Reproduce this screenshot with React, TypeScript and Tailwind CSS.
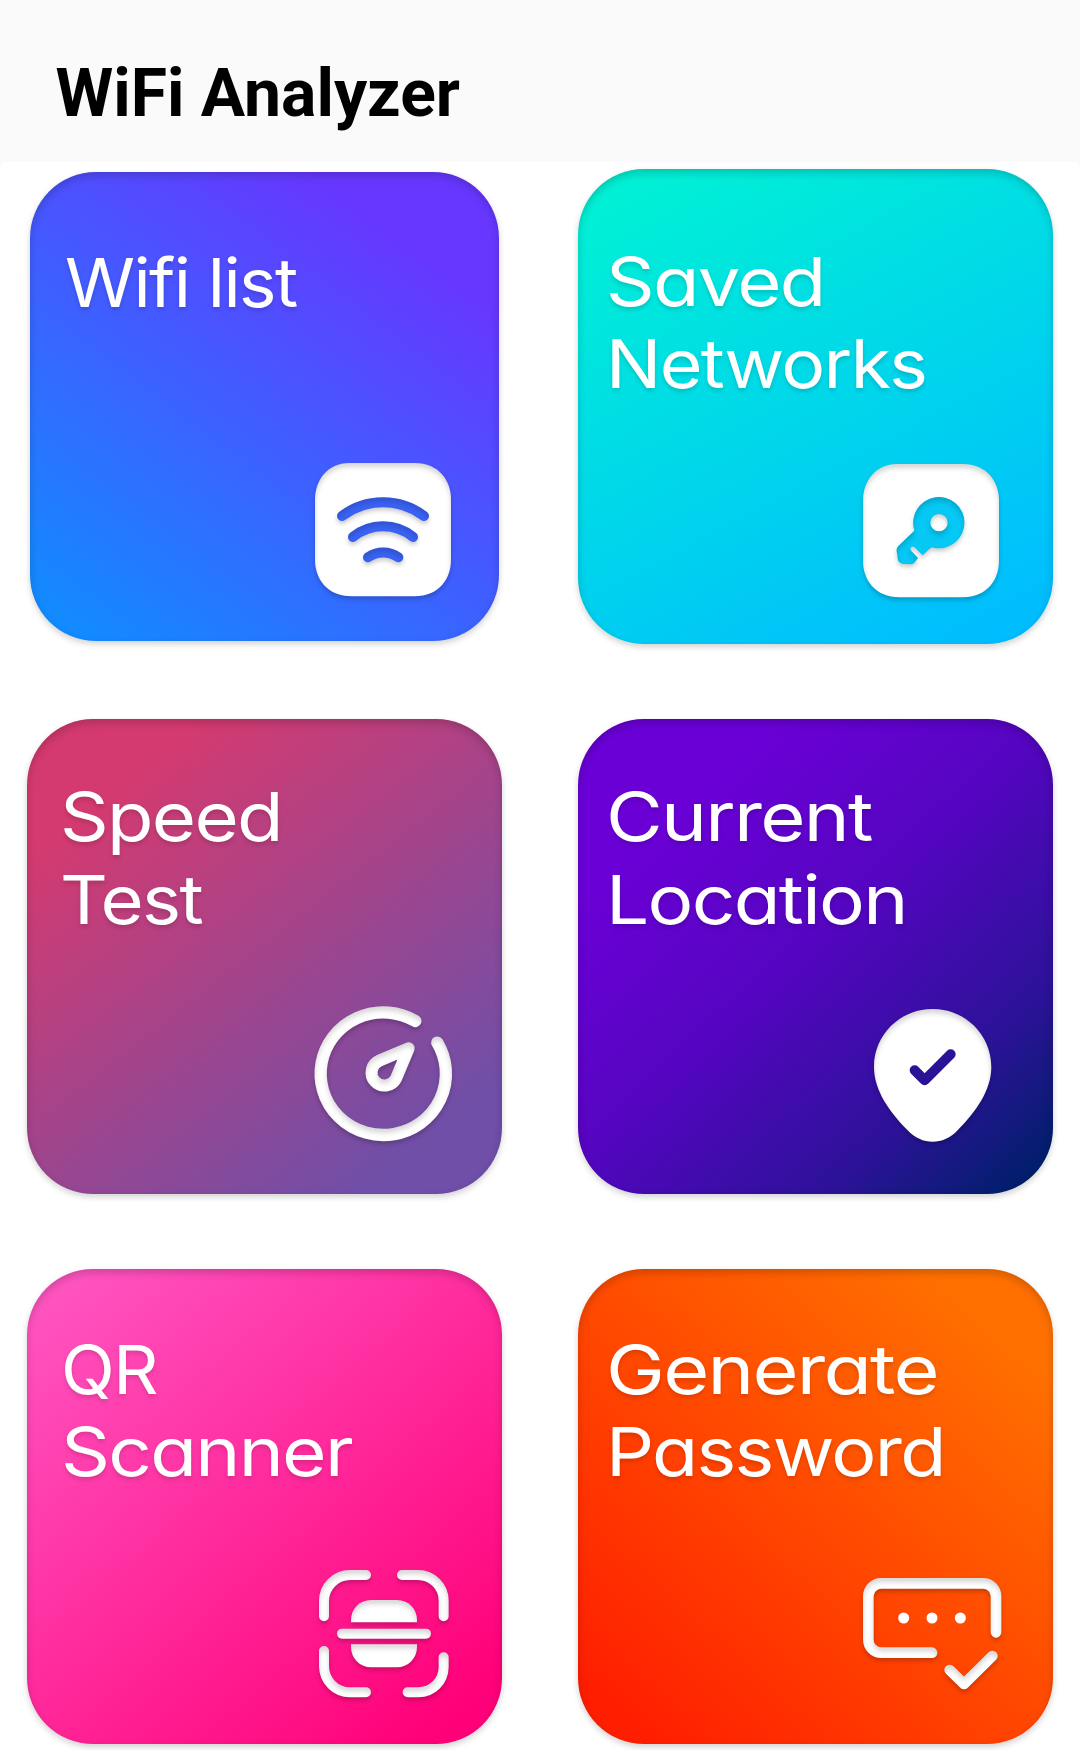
import type { ReactNode } from "react";

type Line = { text: string; scale: string };

type CardProps = {
  lines: Line[];
  shape: string;
  children: ReactNode;
};

function Card({ lines, shape, children }: CardProps) {
  return (
    <button
      className={`flex flex-col items-start justify-between text-left text-white shadow-[0_3px_6px_rgba(0,0,0,0.18),inset_0_4px_8px_rgba(0,0,0,0.18)] ${shape}`}
    >
      <span className="block text-[67px] leading-[82.3px] tracking-[-1.5px] [font-feature-settings:'cv11'] [text-shadow:0_3px_4px_rgba(0,0,0,0.14)]">
        {lines.map((line) => (
          <span key={line.text} className={`block w-max origin-left ${line.scale}`}>
            {line.text}
          </span>
        ))}
      </span>
      <span className="block self-end">{children}</span>
    </button>
  );
}

function Filters() {
  return (
    <svg className="absolute h-0 w-0" aria-hidden="true">
      <defs>
        <filter id="emboss" x="-15%" y="-15%" width="130%" height="135%" colorInterpolationFilters="sRGB">
          <feOffset in="SourceAlpha" dy="11" result="moved" />
          <feGaussianBlur in="moved" stdDeviation="8" result="soft" />
          <feComposite in="SourceAlpha" in2="soft" operator="out" result="edge" />
          <feFlood floodColor="#000" floodOpacity="0.16" />
          <feComposite in2="edge" operator="in" result="innerShade" />
          <feGaussianBlur in="SourceAlpha" stdDeviation="6" result="blurred" />
          <feOffset in="blurred" dy="8" result="drop" />
          <feFlood floodColor="#000" floodOpacity="0.2" />
          <feComposite in2="drop" operator="in" result="dropShade" />
          <feMerge>
            <feMergeNode in="dropShade" />
            <feMergeNode in="SourceGraphic" />
            <feMergeNode in="innerShade" />
          </feMerge>
        </filter>
      </defs>
    </svg>
  );
}

const tilePath =
  "M178 69H372C446 69 482 122 482 178V360C482 416 446 469 372 469H184C110 469 74 416 74 360V178C74 122 110 69 178 69Z";

function WifiIcon() {
  return (
    <svg viewBox="74 69 408 400" className="h-[133.3px] w-[136px] overflow-visible">
      <path d={tilePath} fill="#fff" filter="url(#emboss)" />
      <g fill="none" stroke="#3a63f6" strokeWidth="30" strokeLinecap="round" filter="url(#emboss)">
        <path d="M155 228A205 205 0 0 1 401 228" />
        <path d="M188 291A143 143 0 0 1 368 291" />
        <path d="M233 352A78 78 0 0 1 324 352" />
      </g>
    </svg>
  );
}

function KeyIcon() {
  return (
    <svg viewBox="74 69 408 400" className="h-[133.3px] w-[136px] overflow-visible">
      <path d={tilePath} fill="#fff" filter="url(#emboss)" />
      <g transform="translate(4 1)" filter="url(#emboss)">
        <path
          fill="#05c8f4"
          fillRule="evenodd"
          d="M224 267A77 77 0 1 1 285 320Q276 316 270 322L249 342L224 317Q218 313 214 318Q210 323 215 329L235 350L224 364Q218 370 210 369L186 367Q178 365 175 357L171 330Q169 321 176 314L219 273Q223 270 224 267ZM298 218A26 26 0 1 0 298 270A26 26 0 1 0 298 218Z"
        />
      </g>
    </svg>
  );
}

function SpeedIcon() {
  return (
    <svg viewBox="74 80 414 406" className="h-[135.3px] w-[138px] overflow-visible">
      <g fill="none" stroke="#fff" strokeLinecap="round" strokeLinejoin="round" filter="url(#emboss)">
        <path strokeWidth="37" d="M375 125A188 184 0 1 0 441 190" />
        <path strokeWidth="36" d="M355 207L267 244A39 39 0 1 0 317 298Z" />
      </g>
    </svg>
  );
}

function LocationIcon() {
  return (
    <svg viewBox="99 86 352 400" className="h-[133.3px] w-[117.3px] overflow-visible">
      <path
        fill="#fff"
        filter="url(#emboss)"
        d="M275 86C372 86 451 163 451 260C451 330 405 394 350 450C308 496 242 496 200 450C145 394 99 330 99 260C99 163 178 86 275 86Z"
      />
      <path
        d="M221 270L251 300L329 222"
        fill="none"
        stroke="#2c1295"
        strokeWidth="30"
        strokeLinecap="round"
        strokeLinejoin="round"
      />
    </svg>
  );
}

function ScanIcon() {
  return (
    <svg viewBox="87 91 390 382" className="h-[127.3px] w-[130px] overflow-visible">
      <g filter="url(#emboss)">
        <g fill="none" stroke="#fff" strokeWidth="30" strokeLinecap="round">
          <path d="M228 106H180A78 78 0 0 0 102 184V230" />
          <path d="M336 106H384A77 77 0 0 1 461 183V230" />
          <path d="M102 334V380A78 78 0 0 0 180 458H228" />
          <path d="M461 353V382A76 76 0 0 1 385 458H353" />
          <path d="M156 282H408" />
        </g>
        <path fill="#fff" d="M183 248V241A60 60 0 0 1 243 181H321A60 60 0 0 1 381 241V248Z" />
        <path fill="#fff" d="M183 314V323A60 60 0 0 0 243 383H321A60 60 0 0 0 381 323V314Z" />
      </g>
    </svg>
  );
}

function PasswordIcon() {
  return (
    <svg viewBox="68 115 416 335" className="h-[111.7px] w-[138.7px] overflow-visible">
      <g fill="none" stroke="#fff" strokeWidth="32" strokeLinecap="round" strokeLinejoin="round" filter="url(#emboss)">
        <path d="M275 339H123A39 39 0 0 1 84 300V170A39 39 0 0 1 123 131H428A39 39 0 0 1 467 170V278" />
        <path d="M328 391L371 433L456 349" />
      </g>
      <g fill="#fff">
        <circle cx="190" cy="235" r="16.5" />
        <circle cx="275" cy="235" r="16.5" />
        <circle cx="360" cy="235" r="16.5" />
      </g>
    </svg>
  );
}

export default function App() {
  return (
    <div className="h-[1750px] w-[1080px] overflow-hidden bg-[#fafafa] font-['Inter',sans-serif]">
      <Filters />
      <header className="h-[162px] pt-[61px] pl-[55.5px]">
        <h1 className="font-['Roboto',sans-serif] text-[66px] leading-[66px] font-bold text-black">WiFi Analyzer</h1>
      </header>
      <main className="grid h-[1588px] auto-rows-[475px] grid-cols-[475px_475px] gap-x-[76px] gap-y-[75px] rounded-t-[6px] bg-white pt-[6.5px] pl-[27px]">
        <Card
          lines={[{ text: "Wifi list", scale: "scale-x-[1.061]" }]}
          shape="m-[3px] rounded-[66px] bg-[linear-gradient(37deg,#0d90ff_0%,#6737ff_83%)] pt-[70.6px] pr-[48.5px] pb-[44px] pl-[35px]"
        >
          <WifiIcon />
        </Card>
        <Card
          lines={[
            { text: "Saved", scale: "scale-x-[1.132]" },
            { text: "Networks", scale: "scale-x-[1.095]" },
          ]}
          shape="rounded-[66px] bg-[linear-gradient(152deg,#00f2d4_3%,#00bdff_94%)] pt-[72.6px] pr-[54px] pb-[46.7px] pl-[28px]"
        >
          <KeyIcon />
        </Card>
        <Card
          lines={[
            { text: "Speed", scale: "scale-x-[1.134]" },
            { text: "Test", scale: "scale-x-[1.106]" },
          ]}
          shape="rounded-[66px] bg-[linear-gradient(142deg,#d43a70_16%,#6f4fa8_87%)] pt-[57.9px] pr-[48.6px] pb-[52px] pl-[33.3px]"
        >
          <SpeedIcon />
        </Card>
        <Card
          lines={[
            { text: "Current", scale: "scale-x-[1.16]" },
            { text: "Location", scale: "scale-x-[1.142]" },
          ]}
          shape="rounded-[66px] bg-[linear-gradient(137deg,#6a00d6_20%,#5605c2_47%,#2c1298_77%,#001f6a_96%)] pt-[57.9px] pr-[62px] pb-[51.5px] pl-[28px]"
        >
          <LocationIcon />
        </Card>
        <Card
          lines={[
            { text: "QR", scale: "scale-x-[1.05]" },
            { text: "Scanner", scale: "scale-x-[1.14]" },
          ]}
          shape="rounded-[66px] bg-[linear-gradient(139deg,#ff54c0_5%,#ff0078_93%)] pt-[60px] pr-[53px] pb-[46.5px] pl-[34px]"
        >
          <ScanIcon />
        </Card>
        <Card
          lines={[
            { text: "Generate", scale: "scale-x-[1.18]" },
            { text: "Password", scale: "scale-x-[1.125]" },
          ]}
          shape="rounded-[66px] bg-[linear-gradient(42deg,#ff1e00_7%,#ff7000_88%)] pt-[60px] pr-[51px] pb-[53.8px] pl-[28px]"
        >
          <PasswordIcon />
        </Card>
      </main>
    </div>
  );
}
